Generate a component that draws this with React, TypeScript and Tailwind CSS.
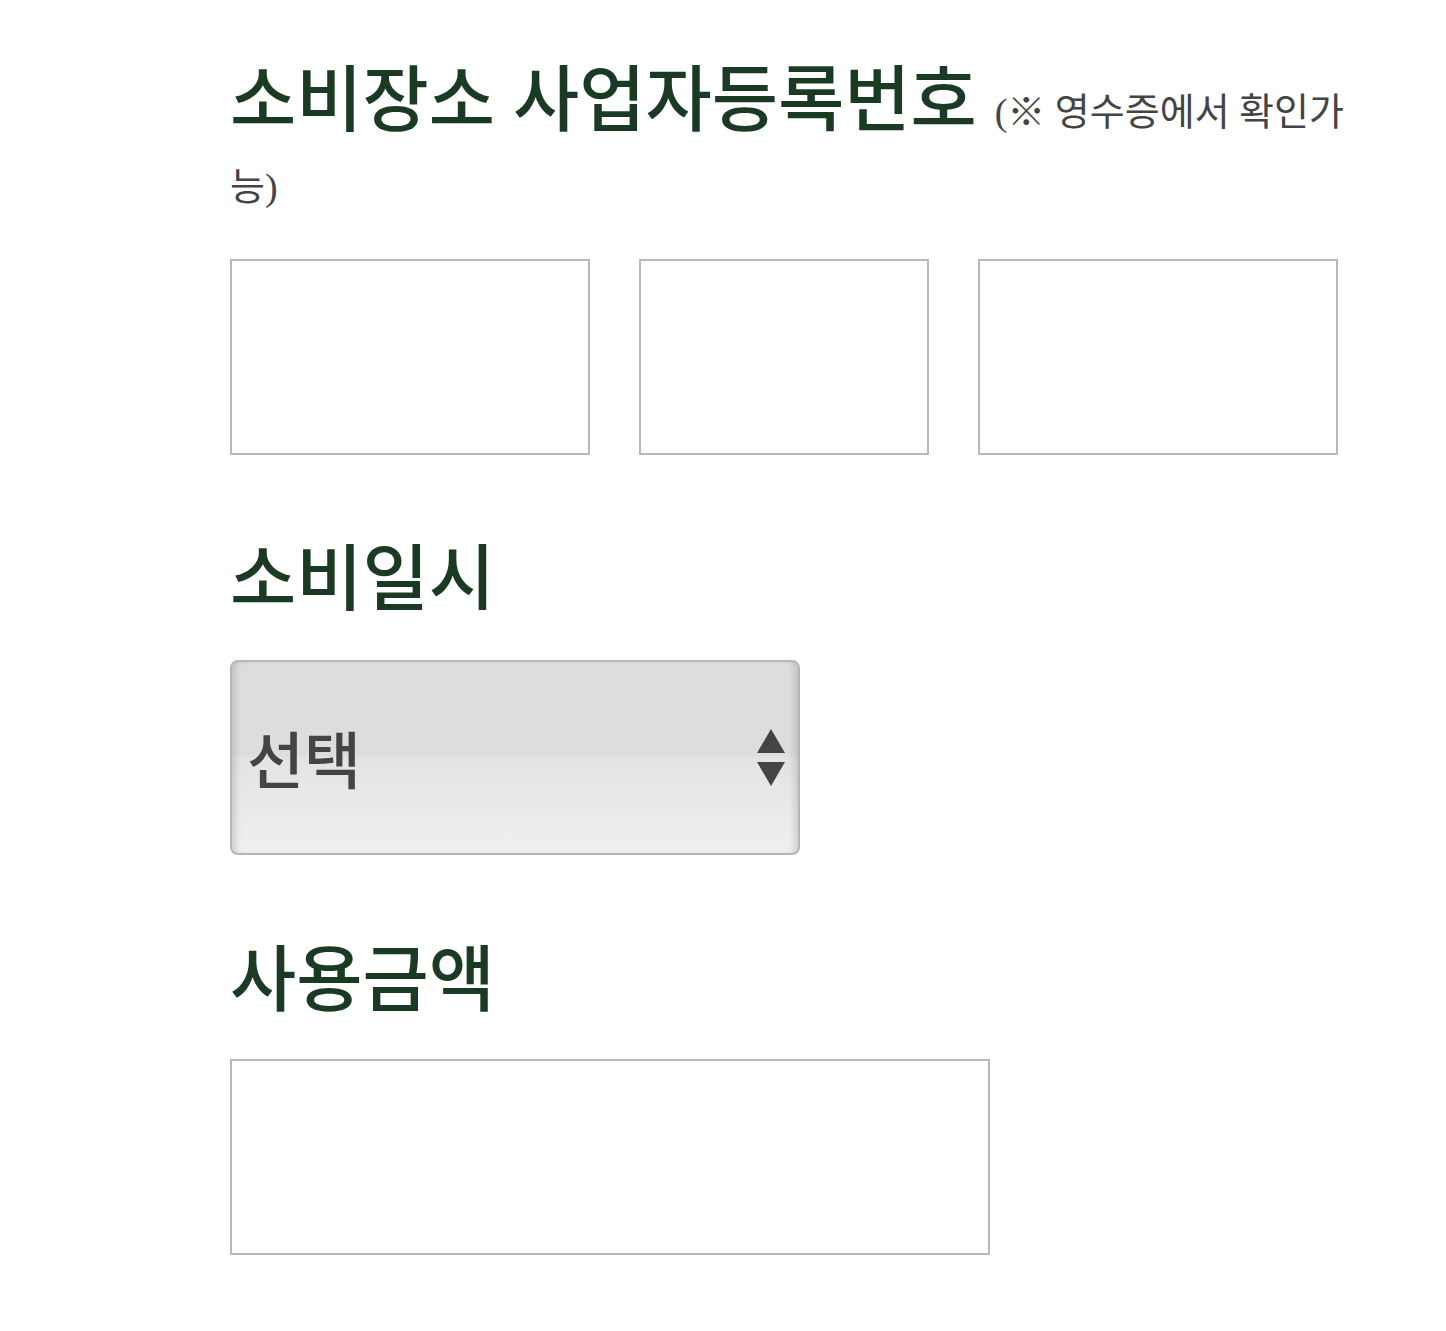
import React from "react";

const headFont = { fontFamily: '"Liberation Serif", "Noto Sans CJK KR", serif' };

export default function App() {
  return (
    <div className="min-h-[1331px] bg-white">
      <div className="ml-[230px] w-[1140px] pt-[64px]">
        {/* Business registration number */}
        <h2
          className="text-[72px] leading-[75px] text-[#1b3a23] font-medium"
          style={headFont}
        >
          소비장소 사업자등록번호{" "}
          <span className="text-[38px] leading-none text-[#444444] font-normal">(※ 영수증에서 확인가능)</span>
        </h2>

        <div className="mt-[45px] flex gap-[49px]">
          <input type="text" className="w-[360px] h-[196px] border-2 border-[#b8b8b8] bg-white outline-none" />
          <input type="text" className="w-[290px] h-[196px] border-2 border-[#b8b8b8] bg-white outline-none" />
          <input type="text" className="w-[360px] h-[196px] border-2 border-[#b8b8b8] bg-white outline-none" />
        </div>

        {/* Date */}
        <h2
          className="mt-[88px] text-[72px] leading-[75px] text-[#1b3a23] font-medium"
          style={headFont}
        >
          소비일시
        </h2>

        <div className="mt-[42px] relative w-[570px] h-[195px] rounded-[8px] border-2 border-[#b6b6b6] overflow-hidden bg-[linear-gradient(to_bottom,#dddddd_0%,#dddddd_49%,#e3e3e3_50%,#f0f0f0_100%)] shadow-[inset_8px_0_6px_-4px_rgba(0,0,0,0.12),inset_-8px_0_6px_-4px_rgba(0,0,0,0.12)]">
          <div className="flex items-center h-full pl-[15px] pr-[12px] justify-between">
            <span
              className="text-[62px] font-medium text-[#444444]"
              style={{ fontFamily: '"Noto Sans CJK KR", sans-serif' }}
            >
              선택
            </span>
            <svg width="30" height="58" viewBox="0 0 30 58">
              <polygon points="15,0 29,24 1,24" fill="#444444" />
              <polygon points="1,33 29,33 15,57" fill="#444444" />
            </svg>
          </div>
        </div>

        {/* Amount */}
        <h2
          className="mt-[89px] text-[72px] leading-[75px] text-[#1b3a23] font-medium"
          style={headFont}
        >
          사용금액
        </h2>

        <div className="mt-[40px]">
          <input type="text" className="w-[760px] h-[196px] border-2 border-[#b8b8b8] bg-white outline-none" />
        </div>
      </div>
    </div>
  );
}
